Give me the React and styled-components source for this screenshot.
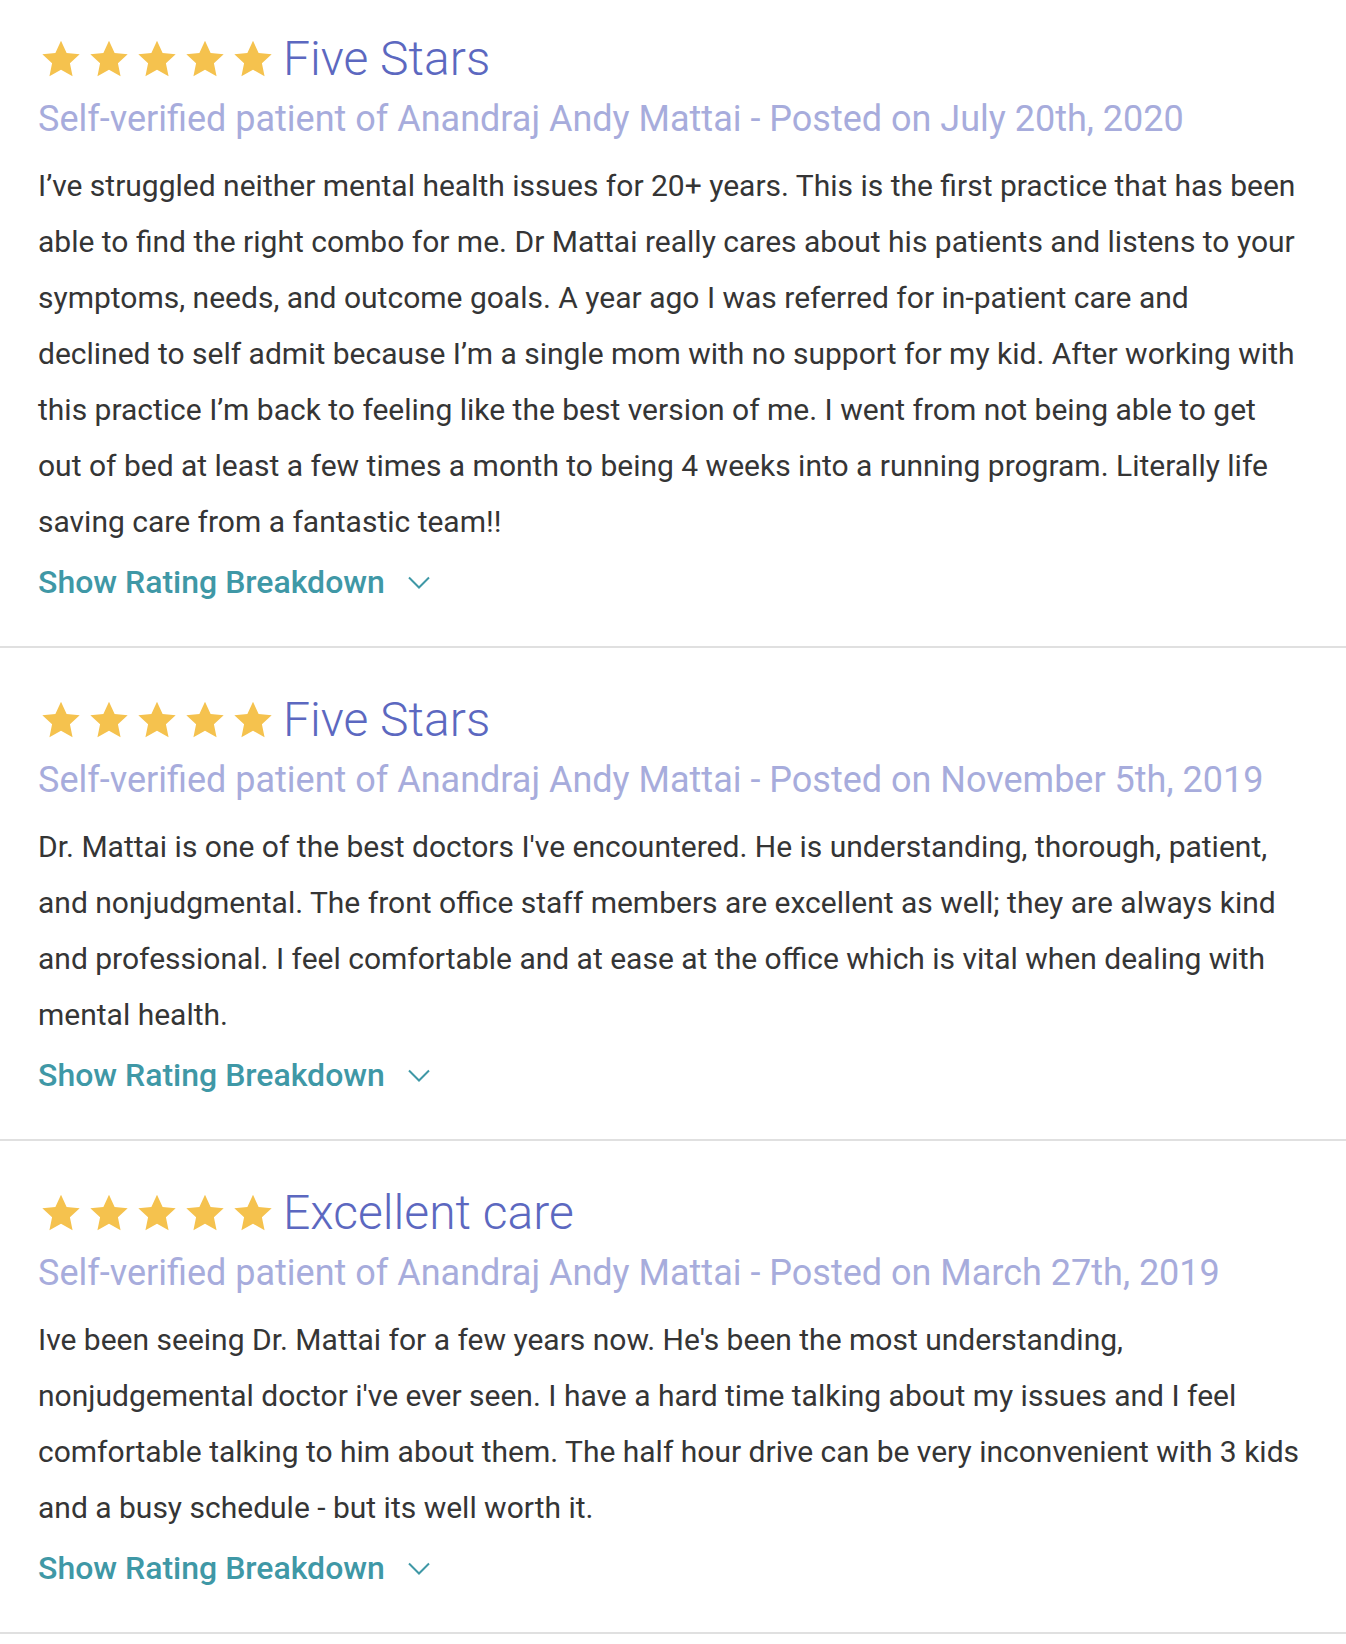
import React from "react";
import styled, { createGlobalStyle } from "styled-components";

const GlobalStyle = createGlobalStyle`
  body {
    margin: 0;
    background: #fff;
    font-family: Roboto, "Liberation Sans", sans-serif;
  }
`;

const colors = {
  star: "#f5c24e",
  title: "#5c68c0",
  meta: "#a7acdc",
  body: "#353535",
  link: "#3f98a6",
  divider: "#e0e0e0",
};

const ReviewList = styled.div`
  width: 1346px;
`;

const ReviewCard = styled.div`
  padding: 48px 43px 44px 38px;
  border-bottom: 2px solid ${colors.divider};

  &:first-child {
    padding-top: 35px;
  }
`;

const Header = styled.div`
  display: flex;
  align-items: center;
  height: 48px;
`;

const Stars = styled.div`
  display: flex;
  gap: 8px;
  margin-left: 3px;
  margin-right: 10px;
`;

const Title = styled.h3`
  margin: 0;
  font-size: 48px;
  font-weight: 300;
  line-height: 48px;
  color: ${colors.title};
`;

const Meta = styled.div`
  margin-top: 16px;
  font-size: 36px;
  line-height: 40px;
  color: ${colors.meta};
`;

const Body = styled.p`
  margin: 19px 0 0;
  font-size: 30px;
  line-height: 56px;
  color: ${colors.body};
`;

const Toggle = styled.button`
  display: flex;
  align-items: center;
  gap: 23px;
  margin-top: 12px;
  padding: 0;
  border: 0;
  background: none;
  font-family: inherit;
  font-size: 32px;
  font-weight: 500;
  line-height: 40px;
  color: ${colors.link};
  cursor: pointer;
`;

const Star = () => (
  <svg width="40" height="38" viewBox="0 0 24 23">
    <path
      d="M12 0.5l3.4 7.3 7.9 0.9-5.9 5.4 1.6 7.9L12 18l-7 4 1.6-7.9L0.7 8.7l7.9-0.9z"
      fill={colors.star}
    />
  </svg>
);

const Chevron = () => (
  <svg width="22" height="13" viewBox="0 0 22 13">
    <path d="M1 1.5l10 10 10-10" fill="none" stroke={colors.link} strokeWidth="2" />
  </svg>
);

const reviews = [
  {
    title: "Five Stars",
    date: "July 20th, 2020",
    text: "I’ve struggled neither mental health issues for 20+ years. This is the first practice that has been able to find the right combo for me. Dr Mattai really cares about his patients and listens to your symptoms, needs, and outcome goals. A year ago I was referred for in-patient care and declined to self admit because I’m a single mom with no support for my kid. After working with this practice I’m back to feeling like the best version of me. I went from not being able to get out of bed at least a few times a month to being 4 weeks into a running program. Literally life saving care from a fantastic team!!",
  },
  {
    title: "Five Stars",
    date: "November 5th, 2019",
    text: "Dr. Mattai is one of the best doctors I've encountered. He is understanding, thorough, patient, and nonjudgmental. The front office staff members are excellent as well; they are always kind and professional. I feel comfortable and at ease at the office which is vital when dealing with mental health.",
  },
  {
    title: "Excellent care",
    date: "March 27th, 2019",
    text: "Ive been seeing Dr. Mattai for a few years now. He's been the most understanding, nonjudgemental doctor i've ever seen. I have a hard time talking about my issues and I feel comfortable talking to him about them. The half hour drive can be very inconvenient with 3 kids and a busy schedule - but its well worth it.",
  },
];

const Review = ({ review }) => (
  <ReviewCard>
    <Header>
      <Stars>
        {[0, 1, 2, 3, 4].map((i) => (
          <Star key={i} />
        ))}
      </Stars>
      <Title>{review.title}</Title>
    </Header>
    <Meta>Self-verified patient of Anandraj Andy Mattai - Posted on {review.date}</Meta>
    <Body>{review.text}</Body>
    <Toggle>
      Show Rating Breakdown
      <Chevron />
    </Toggle>
  </ReviewCard>
);

const App = () => (
  <>
    <GlobalStyle />
    <ReviewList>
      {reviews.map((r, i) => (
        <Review key={i} review={r} />
      ))}
    </ReviewList>
  </>
);

export default App;
